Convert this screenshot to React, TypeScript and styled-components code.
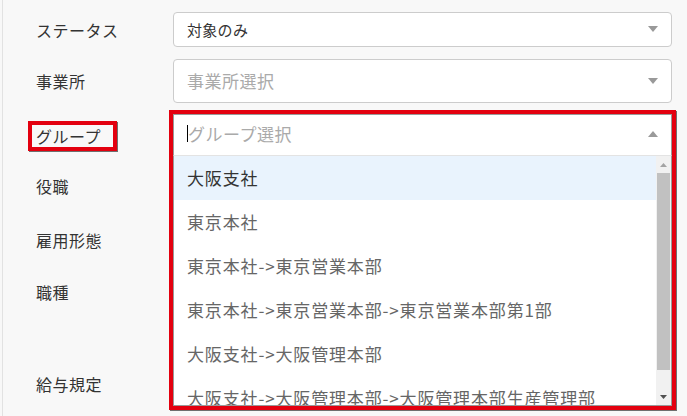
import React from "react";
import styled, { createGlobalStyle } from "styled-components";

const Global = createGlobalStyle`
  html, body {
    margin: 0;
    padding: 0;
    background: #f8f8f8;
    overflow: hidden;
  }
  * { box-sizing: border-box; }
  body {
    font-family: "Noto Sans CJK JP", "Noto Sans", sans-serif;
  }
`;

const Page = styled.div`
  width: 687px;
  height: 416px;
  margin-left: 2px;
  border-left: 1px solid #e2e2e2;
  background: #f8f8f8;
  overflow: hidden;
`;

const Form = styled.div`
  display: flex;
  flex-direction: column;
  gap: 12px;
  padding-top: 12px;
`;

const Row = styled.div<{ $h: number; $top?: boolean }>`
  display: grid;
  grid-template-columns: 170px 499px;
  align-items: ${(p) => (p.$top ? "start" : "center")};
  height: ${(p) => p.$h}px;
`;

const LabelCell = styled.div<{ $pt?: number }>`
  padding-left: 33px;
  padding-top: ${(p) => p.$pt ?? 0}px;
`;

const Label = styled.span<{ $mark?: boolean }>`
  display: inline-block;
  font-size: 16px;
  line-height: 22px;
  letter-spacing: 0.5px;
  color: #333;
  padding: 0 ${(p) => (p.$mark ? 12 : 4)}px 0 4px;
  margin-left: -4px;
  box-shadow: ${(p) =>
    p.$mark ? "0 0 0 4px #e3000f, 1px 1px 0 4px #6f6f6f" : "none"};
`;

const Control = styled.div`
  position: relative;
  height: 100%;
`;

const SelectBox = styled.div`
  display: flex;
  align-items: center;
  justify-content: space-between;
  height: 100%;
  background: #fff;
  border: 1px solid #ccc;
  border-radius: 4px;
  padding: 0 13px 1px 13px;
`;

const Value = styled.span`
  font-size: 15px;
  letter-spacing: 0.3px;
  color: #333;
`;

const Placeholder = styled.span`
  font-size: 17px;
  letter-spacing: 0.5px;
  color: #aaa;
`;

const Caret = ({ up, color = "#999" }: { up?: boolean; color?: string }) => (
  <svg width="10" height="6" viewBox="0 0 10 6">
    <polygon points={up ? "0,6 10,6 5,0" : "0,0 10,0 5,6"} fill={color} />
  </svg>
);

/* open dropdown overlay */
const Frame = styled.div`
  position: absolute;
  top: -1px;
  left: 0;
  right: 0;
  background: #fff;
  box-shadow: 0 0 0 4px #e3000f, 1px 1px 0 4px #6f6f6f;
  z-index: 2;
`;

const OpenInput = styled.div`
  display: flex;
  align-items: center;
  justify-content: space-between;
  height: 42px;
  border: 1px solid #999;
  border-bottom: 1px solid #e3e3e3;
  padding: 0 13px 3px 13px;
`;

const InputText = styled.div`
  display: flex;
  align-items: center;
`;

const Cursor = styled.span`
  display: inline-block;
  width: 1px;
  height: 17px;
  background: #000;
`;

const Menu = styled.div`
  display: flex;
  height: 250px;
  border-left: 1px solid #999;
  border-right: 1px solid #999;
  border-bottom: 1px solid #999;
`;

const OptionList = styled.div`
  flex: 1;
  overflow: hidden;
`;

const Option = styled.div<{ $active?: boolean }>`
  height: 44px;
  line-height: 44px;
  padding: 0 13px;
  font-size: 17px;
  letter-spacing: 0.85px;
  white-space: nowrap;
  color: ${(p) => (p.$active ? "#333" : "#666")};
  background: ${(p) => (p.$active ? "#e9f3fd" : "#fff")};
`;

const ScrollBar = styled.div`
  width: 15px;
  display: flex;
  flex-direction: column;
  background: #f1f1f1;
`;

const ScrollBtn = styled.div`
  height: 17px;
  display: flex;
  align-items: center;
  justify-content: center;
`;

const Thumb = styled.div`
  height: 197px;
  margin: 0 1px;
  background: #c1c1c1;
`;

const ScrollFill = styled.div`
  flex: 1;
`;

const SmallTri = ({ up, color }: { up?: boolean; color: string }) => (
  <svg width="7" height="4" viewBox="0 0 7 4">
    <polygon points={up ? "0,4 7,4 3.5,0" : "0,0 7,0 3.5,4"} fill={color} />
  </svg>
);

const options = [
  "大阪支社",
  "東京本社",
  "東京本社->東京営業本部",
  "東京本社->東京営業本部->東京営業本部第1部",
  "大阪支社->大阪管理本部",
  "大阪支社->大阪管理本部->大阪管理本部生産管理部",
];

export default function App() {
  return (
    <>
      <Global />
      <Page>
        <Form>
          <Row $h={35}>
            <LabelCell>
              <Label>ステータス</Label>
            </LabelCell>
            <Control>
              <SelectBox>
                <Value>対象のみ</Value>
                <Caret />
              </SelectBox>
            </Control>
          </Row>
          <Row $h={44}>
            <LabelCell>
              <Label>事業所</Label>
            </LabelCell>
            <Control>
              <SelectBox>
                <Placeholder>事業所選択</Placeholder>
                <Caret />
              </SelectBox>
            </Control>
          </Row>
          <Row $h={41}>
            <LabelCell>
              <Label $mark>グループ</Label>
            </LabelCell>
            <Control>
              <Frame>
                <OpenInput>
                  <InputText>
                    <Cursor />
                    <Placeholder>グループ選択</Placeholder>
                  </InputText>
                  <Caret up color="#9a9a9a" />
                </OpenInput>
                <Menu>
                  <OptionList>
                    {options.map((o, i) => (
                      <Option key={o} $active={i === 0}>
                        {o}
                      </Option>
                    ))}
                  </OptionList>
                  <ScrollBar>
                    <ScrollBtn>
                      <SmallTri up color="#a3a3a3" />
                    </ScrollBtn>
                    <Thumb />
                    <ScrollFill />
                    <ScrollBtn>
                      <SmallTri color="#505050" />
                    </ScrollBtn>
                  </ScrollBar>
                </Menu>
              </Frame>
            </Control>
          </Row>
          <Row $h={36}>
            <LabelCell>
              <Label>役職</Label>
            </LabelCell>
            <Control>
              <SelectBox />
            </Control>
          </Row>
          <Row $h={48}>
            <LabelCell>
              <Label>雇用形態</Label>
            </LabelCell>
            <Control>
              <SelectBox />
            </Control>
          </Row>
          <Row $h={78} $top>
            <LabelCell $pt={4}>
              <Label>職種</Label>
            </LabelCell>
            <Control>
              <SelectBox />
            </Control>
          </Row>
          <Row $h={36}>
            <LabelCell>
              <Label>給与規定</Label>
            </LabelCell>
            <Control>
              <SelectBox />
            </Control>
          </Row>
        </Form>
      </Page>
    </>
  );
}
